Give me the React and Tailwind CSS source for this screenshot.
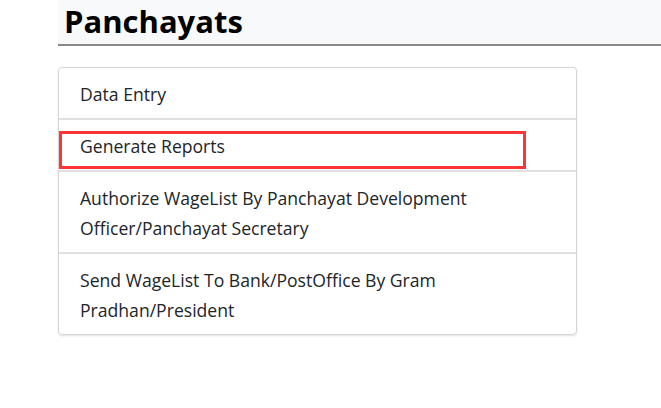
export default function App() {
  const items = [
    "Data Entry",
    "Generate Reports",
    "Authorize WageList By Panchayat Development Officer/Panchayat Secretary",
    "Send WageList To Bank/PostOffice By Gram Pradhan/President",
  ];

  return (
    <div className="min-h-[408px] bg-white pl-[58px] font-['Open_Sans',sans-serif] text-[#212529]">
      <h1 className="h-[46px] border-b-2 border-[#888888] bg-[#f8f9fa] pl-[6px] text-[31px] font-bold leading-[43px] text-black">
        Panchayats
      </h1>

      <div className="mt-[21px] w-[519px] rounded-[4px] border border-[#d6d6d6] shadow-[0_1px_2px_rgba(0,0,0,0.12)]">
        {items.map((item, i) => (
          <div
            key={item}
            className={
              "relative pb-[9px] pl-[21px] pr-[50px] pt-[11px] text-[17.6px] leading-[30px]" +
              (i < items.length - 1 ? " border-b-2 border-[#e0e0e0]" : "")
            }
          >
            {item}
            {i === 1 && (
              <span className="absolute left-0 top-[11px] h-[38px] w-[467px] border-[3px] border-[#ff3535]" />
            )}
          </div>
        ))}
      </div>
    </div>
  );
}
